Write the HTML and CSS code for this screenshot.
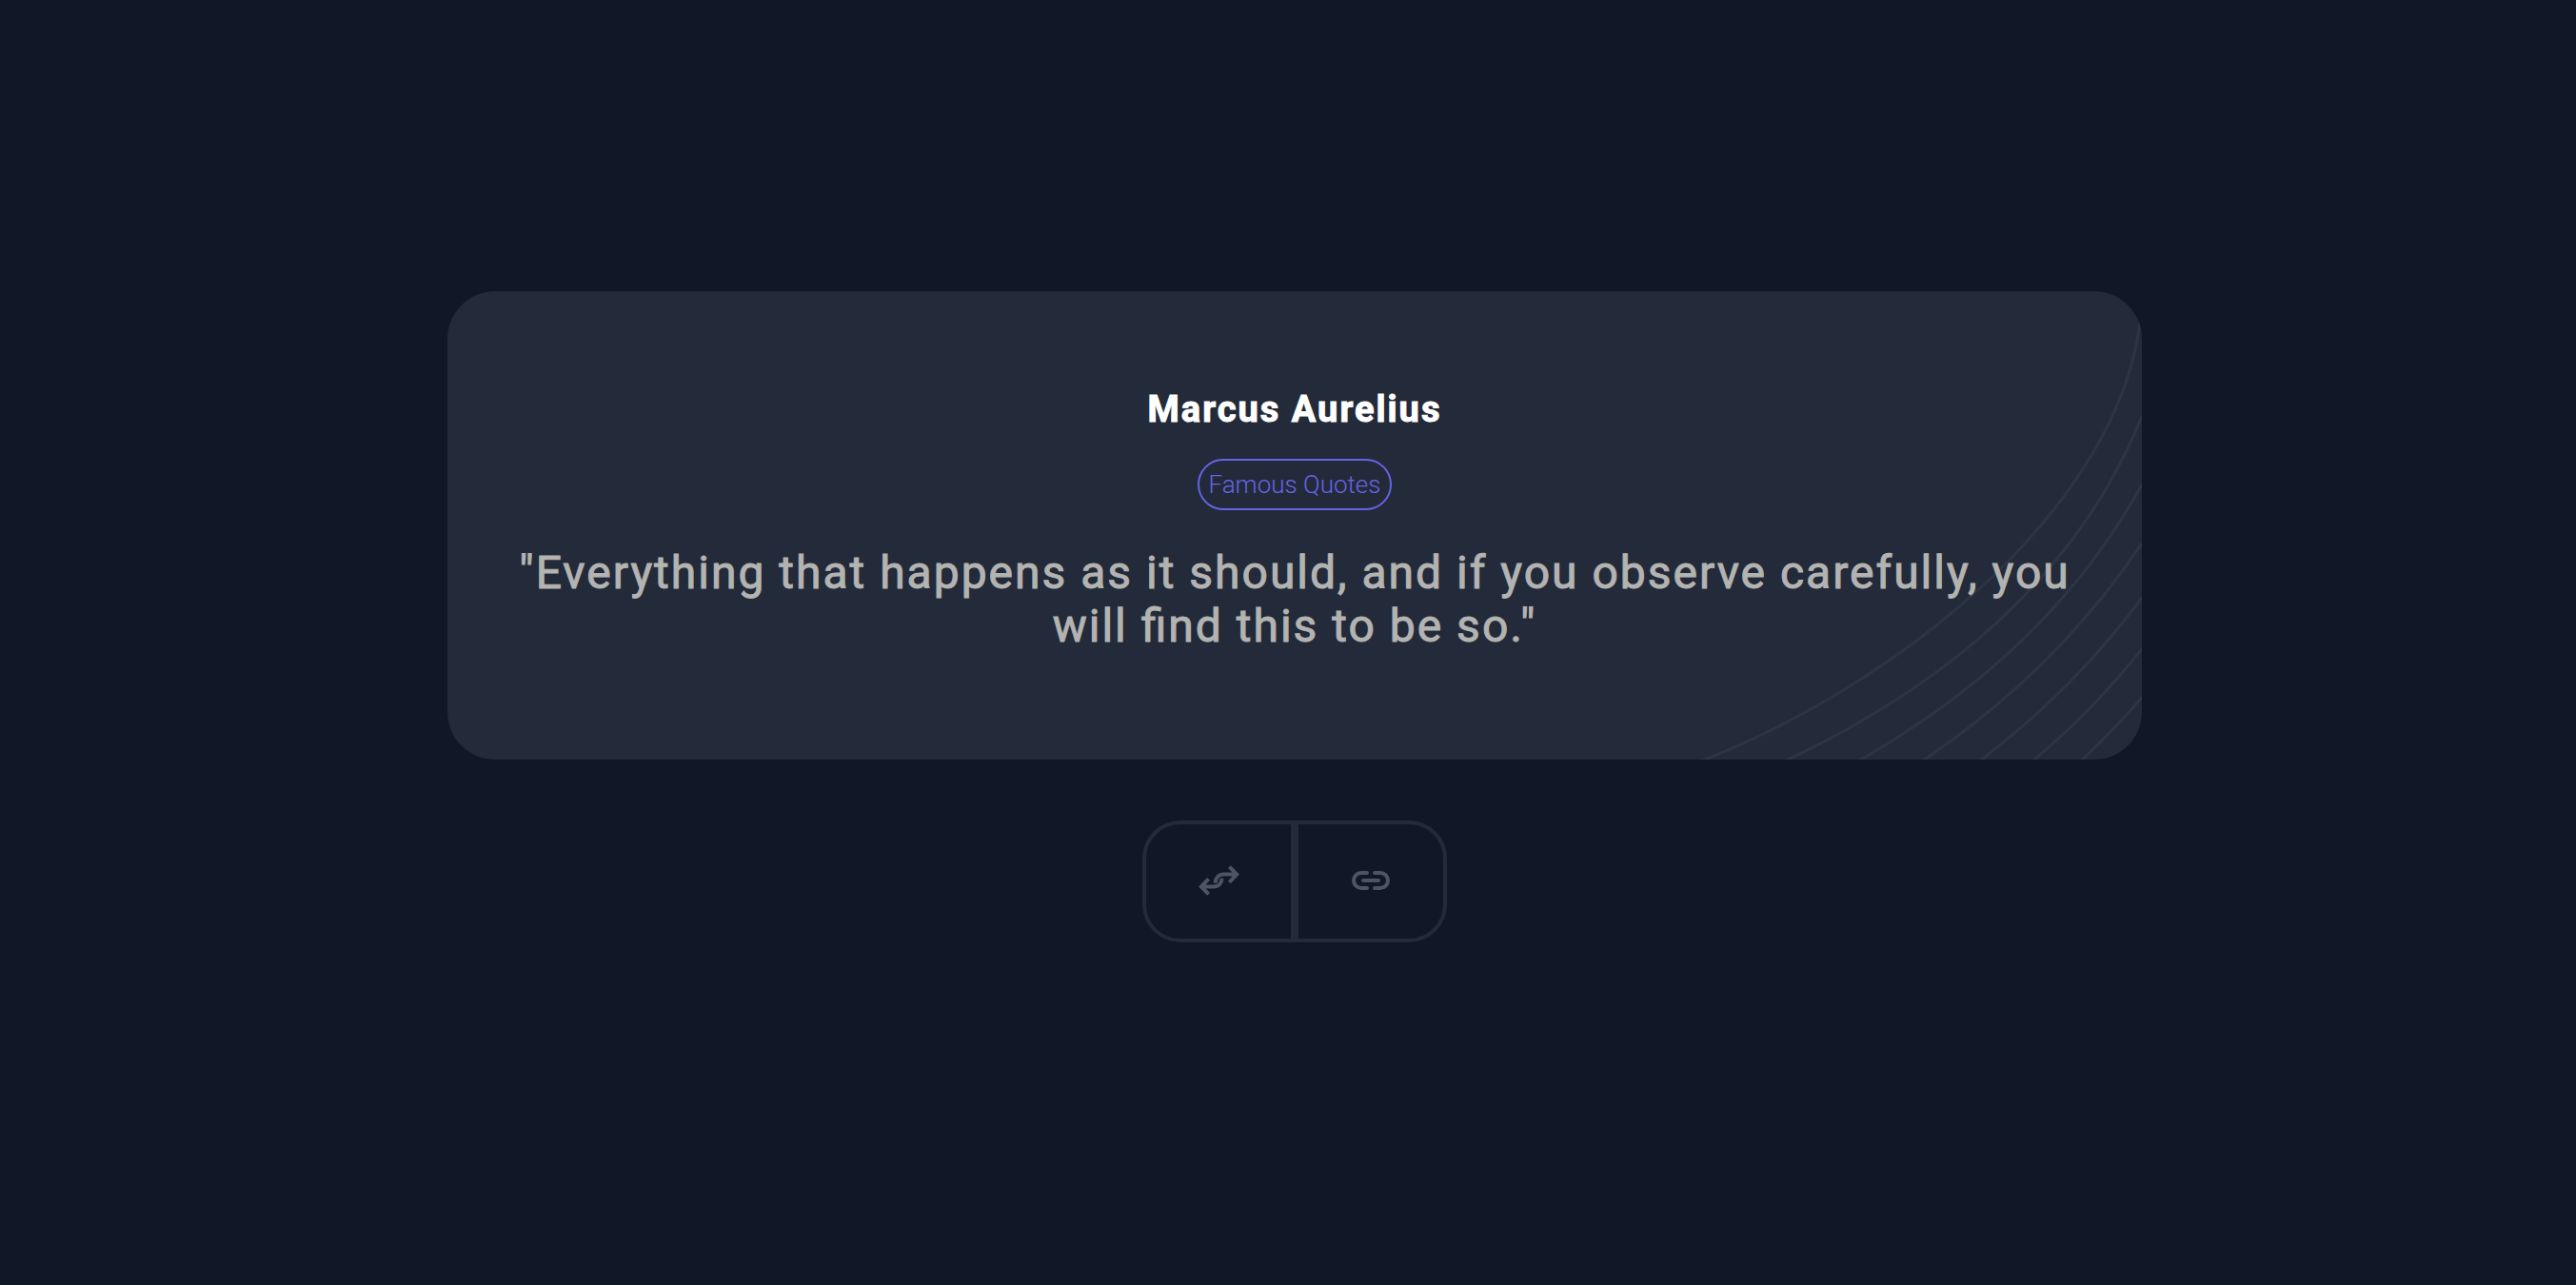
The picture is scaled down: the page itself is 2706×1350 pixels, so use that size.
FILE: index.html
```html
<!DOCTYPE html>
<html lang="en">
<head>
<meta charset="utf-8">
<meta name="viewport" content="width=device-width, initial-scale=1">
<title>Famous Quotes</title>
<link rel="stylesheet" href="styles.css">
</head>
<body>
<main class="page">
  <article class="card">
    <svg class="card-arcs" viewBox="0 47 1509 1455" aria-hidden="true">
      <path d="M1504 130C1440 720 745 1272 140 1506"/>
      <path d="M1509 434Q1235 1111 405 1504"/>
      <path d="M1509 646Q1226 1163 632 1504"/>
      <path d="M1509 829Q1240 1229 829 1504"/>
      <path d="M1509 998Q1295 1286 1007 1504"/>
      <path d="M1509 1157Q1359 1347 1172 1504"/>
      <path d="M1509 1308Q1422 1409 1322 1504"/>
    </svg>
    <h1 class="author">Marcus Aurelius</h1>
    <span class="tag">Famous Quotes</span>
    <p class="quote">"Everything that happens as it should, and if you observe carefully, you will find this to be so."</p>
  </article>
  <div class="actions">
    <button class="action" type="button" aria-label="New quote">
      <svg class="icon" viewBox="0 0 24 24" aria-hidden="true">
        <path d="M17.7 4.8L21.6 8.8L17.7 12.9M21 8.8H14.8C12.2 8.8 10.4 10.6 10.3 13.3"/>
        <path d="M6.8 11.2L2.9 15.2L6.8 19.2M3.5 15.2H9.3C12 15.2 13.7 13.4 13.7 10.9"/>
      </svg>
    </button>
    <button class="action" type="button" aria-label="Copy link">
      <svg class="icon icon-round" viewBox="0 0 24 24" aria-hidden="true">
        <path d="M10 8H7a4 4 0 0 0 0 8h3M14 8h3a4 4 0 0 1 0 8h-3M8 12h8"/>
      </svg>
    </button>
  </div>
</main>
</body>
</html>
```
FILE: styles.css
```css
* {
  box-sizing: border-box;
}

body {
  margin: 0;
  background: #101726;
  font-family: Roboto, "Liberation Sans", sans-serif;
}

.page {
  display: flex;
  flex-direction: column;
  align-items: center;
  justify-content: center;
  gap: 64px;
  min-height: 100vh;
  padding: 0 0 54px 14px;
}

.card {
  position: relative;
  display: flex;
  flex-direction: column;
  align-items: center;
  width: 100%;
  max-width: 1780px;
  padding: 100px 64px 112px;
  overflow: hidden;
  border-radius: 50px;
  background: #232a39;
  text-align: center;
}

.card-arcs {
  position: absolute;
  right: 0;
  bottom: 0;
  height: 100%;
  fill: none;
  stroke: #2d3444;
  stroke-width: 9;
}

.author {
  margin: 0 0 28px;
  color: #fff;
  font-size: 38px;
  font-weight: 700;
  line-height: 48px;
  letter-spacing: 2px;
  -webkit-text-stroke: 1px currentColor;
}

.tag {
  margin-bottom: 38px;
  padding: 10px 9px;
  border: 2px solid #6664e6;
  border-radius: 27px;
  color: #6664e6;
  font-size: 26px;
  font-weight: 300;
  line-height: 30px;
}

.quote {
  position: relative;
  margin: 0;
  color: #b3b3b1;
  font-size: 48px;
  font-weight: 400;
  line-height: 56px;
  letter-spacing: 2px;
  font-feature-settings: "liga" 1;
  -webkit-text-stroke: 1px currentColor;
}

.actions {
  display: flex;
}

.action {
  display: flex;
  align-items: center;
  justify-content: center;
  width: 160px;
  height: 128px;
  padding: 0 0 2px;
  border: 4px solid #232a39;
  border-radius: 40px 0 0 40px;
  background: none;
  color: #4b5563;
  cursor: pointer;
}

.action:last-child {
  border-radius: 0 40px 40px 0;
}

.icon {
  width: 48px;
  height: 48px;
  fill: none;
  stroke: currentColor;
  stroke-width: 2;
}

.icon-round {
  stroke-linecap: round;
}
```
